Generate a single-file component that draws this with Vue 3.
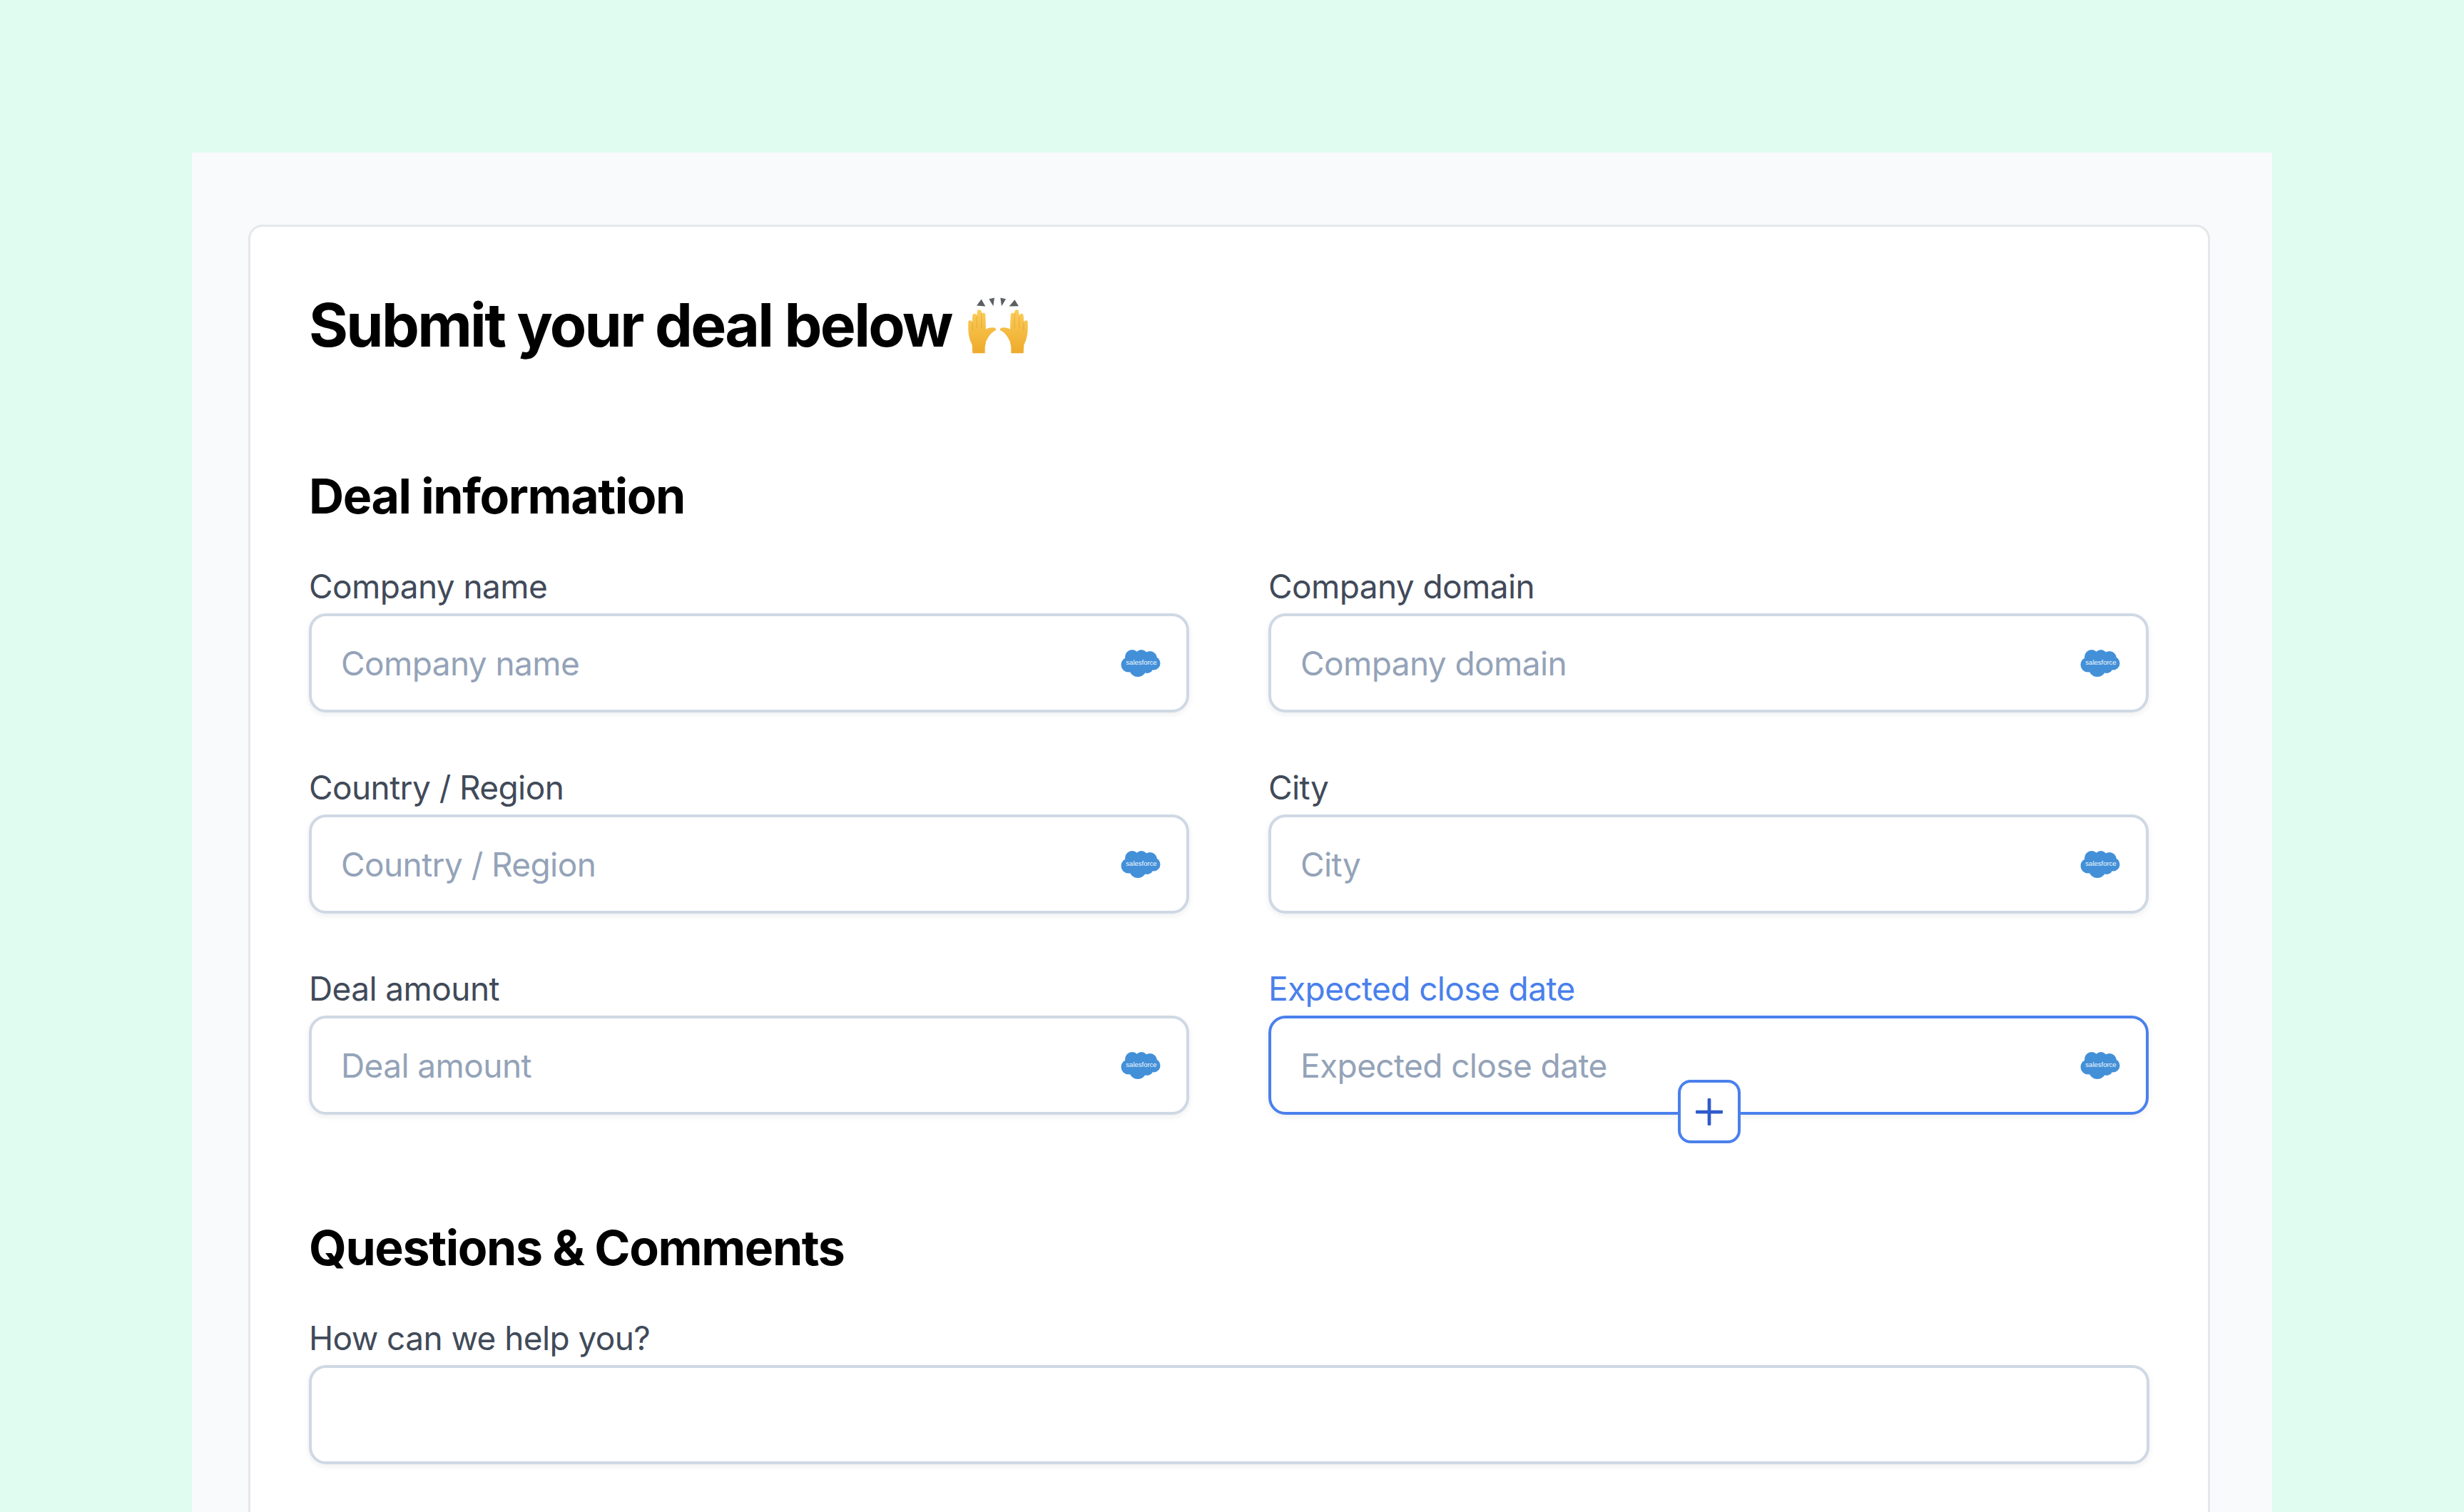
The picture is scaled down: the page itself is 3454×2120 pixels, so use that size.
<script setup>
const rows = [
  { label: 'Company name', active: false },
  { label: 'Company domain', active: false },
  { label: 'Country / Region', active: false },
  { label: 'City', active: false },
  { label: 'Deal amount', active: false },
  { label: 'Expected close date', active: true },
]
</script>

<template>
  <div class="page">
    <div class="panel">
      <div class="card">
        <h1 class="title">
          <span>Submit your deal below</span>
          <svg class="hands" viewBox="40 105 270 245" role="img" aria-label="raising hands">
            <defs>
              <linearGradient id="skin" x1="0" y1="0" x2="0" y2="1">
                <stop offset="0" stop-color="#fbcd5a" />
                <stop offset="1" stop-color="#eeaa2b" />
              </linearGradient>
              <g id="hand">
                <path fill="url(#skin)" d="M68 345 L66 310 C55 290 50 265 50 245 L50 215 C50 205 64 205 66 215 L68 188 C68 176 84 176 85 188 L88 170 C88 160 103 160 105 170 L108 180 C110 172 122 174 122 185 L124 245 C130 240 145 236 158 238 C168 240 170 248 160 252 C145 258 135 275 125 295 L120 320 L120 345 Z" />
                <path fill="none" stroke="#d9952a" stroke-opacity="0.55" stroke-width="3" d="M67 215 L68 250 M85 190 L86 240 M105 175 L106 240" />
              </g>
            </defs>
            <g fill="#5b5f63">
              <path d="M85 145 L105 118 L122 148 Z" />
              <path d="M137 117 L160 112 L155 147 Z" />
              <path d="M185 112 L208 117 L190 147 Z" />
              <path d="M245 120 L262 147 L222 148 Z" />
            </g>
            <use href="#hand" />
            <use href="#hand" transform="translate(350 0) scale(-1 1)" />
          </svg>
        </h1>

        <h2 class="section first">Deal information</h2>
        <div class="grid">
          <div v-for="r in rows" :key="r.label" class="field" :class="{ active: r.active }">
            <div class="label">{{ r.label }}</div>
            <div class="box">
              <span class="placeholder">{{ r.label }}</span>
              <svg class="sf" viewBox="0 0 56 40" role="img" aria-label="Salesforce">
                <g fill="#4390d8">
                  <circle cx="16" cy="11" r="10" />
                  <circle cx="29" cy="10" r="9" />
                  <circle cx="41" cy="13" r="10" />
                  <circle cx="46" cy="20" r="9.5" />
                  <circle cx="11" cy="22" r="10.5" />
                  <circle cx="24" cy="27" r="12" />
                  <circle cx="37" cy="25" r="9" />
                </g>
                <text x="29" y="22" text-anchor="middle" class="sf-text">salesforce</text>
              </svg>
              <button v-if="r.active" class="plus" type="button" aria-label="Add">
                <svg viewBox="0 0 40 40">
                  <path d="M20 2 V38 M2 20 H38" fill="none" stroke="#2f5bcb" stroke-width="5" stroke-linecap="round" />
                </svg>
              </button>
            </div>
          </div>
        </div>

        <h2 class="section second">Questions &amp; Comments</h2>
        <div class="field help">
          <div class="label">How can we help you?</div>
          <div class="box"></div>
        </div>
      </div>
    </div>
  </div>
</template>

<style>
html, body { margin: 0; background: #e0fbf0; }
</style>

<style scoped>
.page {
  height: 2120px;
  overflow: hidden;
  background: #e0fbf0;
  padding: 214px 269px 0;
  box-sizing: border-box;
  font-family: Inter, "Liberation Sans", sans-serif;
}
.panel {
  width: 2916px;
  height: 1906px;
  box-sizing: border-box;
  background: #f9fafb;
  padding: 101px 0 0 79px;
}
.card {
  width: 2750px;
  height: 1900px;
  box-sizing: border-box;
  background: #fff;
  border: 3px solid #e5e7eb;
  border-radius: 20px;
  padding: 0 82px;
}
.title {
  margin: 0;
  padding-top: 87px;
  display: flex;
  align-items: flex-start;
  gap: 20px;
  font-size: 84px;
  line-height: 102px;
  font-weight: 700;
  letter-spacing: -2.7px;
  color: #000;
}
.hands {
  width: 90px;
  height: 82px;
  margin-top: 10px;
  flex: none;
}
.section {
  margin: 0;
  font-size: 68px;
  line-height: 84px;
  font-weight: 700;
  letter-spacing: -1.4px;
  color: #000;
}
.section.first { padding-top: 146px; }
.section.second { padding-top: 144px; }
.grid {
  display: grid;
  grid-template-columns: 1234px 1234px;
  column-gap: 111px;
  row-gap: 77px;
  padding-top: 57px;
}
.field { display: flex; flex-direction: column; }
.help { padding-top: 57px; }
.label {
  font-size: 46px;
  line-height: 56px;
  margin-bottom: 10px;
  color: #414a59;
  letter-spacing: -0.6px;
}
.box {
  position: relative;
  height: 139px;
  box-sizing: border-box;
  padding: 0 36px 0 41px;
  display: flex;
  align-items: center;
  justify-content: space-between;
  background: #fff;
  border: 4px solid #cfd8e4;
  border-radius: 24px;
  box-shadow: 0 3px 8px rgba(15, 23, 42, 0.07);
}
.placeholder {
  font-size: 46px;
  color: #94a3b8;
  letter-spacing: -0.6px;
}
.sf { width: 56px; height: 40px; flex: none; }
.sf-text {
  font-family: "Liberation Sans", sans-serif;
  font-size: 9.5px;
  fill: #f4f9fe;
}
.active .label { color: #4a80ec; }
.active .box { border-color: #4a80ec; }
.plus {
  position: absolute;
  left: 570px;
  top: 86px;
  width: 88px;
  height: 89px;
  box-sizing: border-box;
  padding: 0;
  display: flex;
  align-items: center;
  justify-content: center;
  background: #fff;
  border: 4px solid #4a80ec;
  border-radius: 18px;
}
.plus svg { width: 38px; height: 38px; }
</style>
